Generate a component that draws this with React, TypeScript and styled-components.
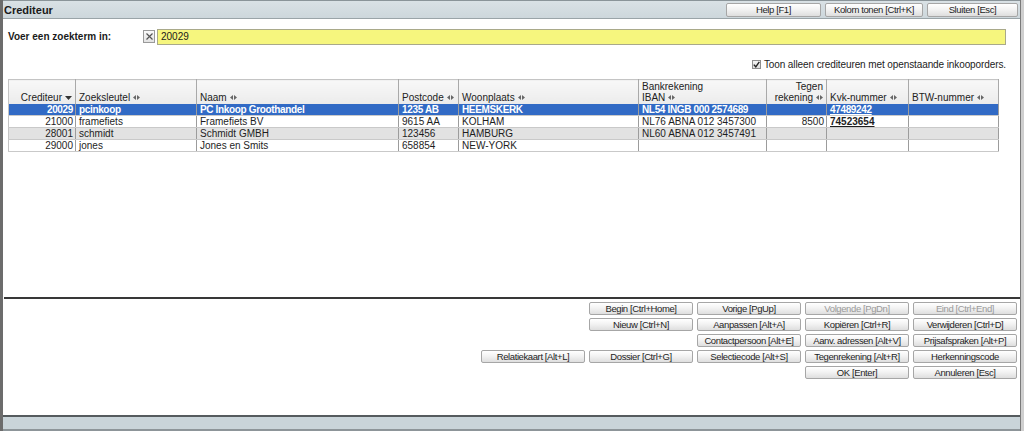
import React from "react";
import styled, { createGlobalStyle, css } from "styled-components";

const Global = createGlobalStyle`
  html, body { margin: 0; padding: 0; background: #cfcfcf; }
  body { font-family: "Liberation Sans", Arial, sans-serif; font-size: 10px; color: #1e1e1e; }
  * { box-sizing: border-box; }
`;

const Frame = styled.div`
  width: 1021px;
  height: 431px;
  display: flex;
  flex-direction: column;
  background: #fff;
  border-left: 3px solid #6c6c6c;
  border-right: 1px solid #7a7a7a;
  overflow: hidden;
`;

const TitleBar = styled.div`
  height: 19px;
  flex: none;
  display: flex;
  align-items: center;
  justify-content: space-between;
  padding: 0 2px 0 1px;
  background: linear-gradient(#d9e1e5, #cdd7dc);
  border-top: 1px solid #8a9499;
  border-bottom: 1px solid #9aa4a8;
`;

const Title = styled.span`
  font-size: 11px;
  font-weight: bold;
  color: #1a1a1a;
`;

const TitleButtons = styled.div`
  display: flex;
  gap: 4px;
`;

const Button = styled.button<{ $w?: number; $disabled?: boolean }>`
  width: ${(p) => (p.$w ? `${p.$w}px` : "auto")};
  height: 14px;
  padding: 0 4px;
  margin: 0;
  font-family: "Liberation Sans", Arial, sans-serif;
  font-size: 9.5px;
  letter-spacing: -0.4px;
  line-height: 12px;
  color: ${(p) => (p.$disabled ? "#9a9a9a" : "#1e1e1e")};
  background: linear-gradient(#ffffff, #f3f3f3 45%, #dedede);
  border: 1px solid #a6a6a6;
  border-radius: 2px;
  white-space: nowrap;
  overflow: hidden;
  cursor: default;
`;

const Body = styled.div`
  flex: 1;
  display: flex;
  flex-direction: column;
  padding: 10px 14px 0 5px;
`;

const SearchRow = styled.div`
  display: flex;
  align-items: flex-start;
  height: 16px;
`;

const SearchLabel = styled.label`
  width: 135px;
  flex: none;
  font-size: 10px;
  font-weight: bold;
  padding-top: 2px;
  color: #1a1a1a;
`;

const ClearBox = styled.span`
  width: 12px;
  height: 13px;
  margin-top: 1px;
  margin-right: 2px;
  flex: none;
  display: flex;
  align-items: center;
  justify-content: center;
  border: 1px solid #9a9a9a;
  background: linear-gradient(#fafafa, #e2e2e2);
`;

const SearchInput = styled.div`
  flex: 1;
  height: 16px;
  background: #f6f67e;
  border: 1px solid #a9a98a;
  padding: 1px 3px;
  font-size: 10px;
  line-height: 12px;
  color: #1a1a1a;
`;

const FilterRow = styled.div`
  display: flex;
  justify-content: flex-end;
  align-items: center;
  gap: 3px;
  margin-top: 14px;
  height: 10px;
  font-size: 10px;
  letter-spacing: -0.1px;
  color: #222;
`;

const CheckBox = styled.span`
  width: 9px;
  height: 9px;
  display: flex;
  align-items: center;
  justify-content: center;
  border: 1px solid #8e8e8e;
  background: linear-gradient(#f4f4f4, #dcdcdc);
`;

const GridTable = styled.table`
  margin-top: 10px;
  width: 990px;
  table-layout: fixed;
  border-collapse: collapse;
  border: 1px solid #c4c4c4;
  font-size: 10px;
`;

const HeadCell = styled.th<{ $align?: string }>`
  height: 24px;
  padding: 0 3px 1px;
  vertical-align: bottom;
  text-align: ${(p) => p.$align || "left"};
  font-weight: normal;
  line-height: 11px;
  color: #222;
  background: linear-gradient(#f8f8f8, #ebebeb);
  border-right: 1px solid #a9a9a9;
  border-top: 1px solid #c4c4c4;
  white-space: nowrap;
  overflow: hidden;
`;

const Row = styled.tr<{ $selected?: boolean; $shade?: boolean }>`
  height: 12px;
  background: ${(p) => (p.$selected ? "#316ac5" : p.$shade ? "#e2e2e2" : "#fff")};
  color: ${(p) => (p.$selected ? "#fff" : "#1e1e1e")};
  ${(p) =>
    p.$selected &&
    css`
      font-weight: bold;
      letter-spacing: -0.35px;
    `}
`;

const Cell = styled.td<{ $align?: string }>`
  height: 12px;
  padding: 0 2px 0 3px;
  line-height: 11px;
  text-align: ${(p) => p.$align || "left"};
  border-right: 1px solid #9c9c9c;
  border-bottom: 1px solid #c9c9c9;
  white-space: nowrap;
  overflow: hidden;
`;

const Link = styled.span`
  text-decoration: underline;
  font-weight: bold;
`;

const Separator = styled.div`
  flex: none;
  height: 2px;
  background: #383838;
  margin-left: 1px;
`;

const ButtonArea = styled.div`
  flex: none;
  height: 116px;
  display: flex;
  justify-content: flex-end;
  padding: 3px 3px 0 0;
`;

const ButtonGrid = styled.div`
  display: grid;
  grid-template-columns: repeat(5, 104px);
  grid-auto-rows: 13px;
  column-gap: 4px;
  row-gap: 3px;
`;

const GridButton = styled(Button)<{ $col: number; $row: number }>`
  grid-column: ${(p) => p.$col};
  grid-row: ${(p) => p.$row};
  width: 100%;
  height: 13px;
  line-height: 11px;
`;

const StatusBar = styled.div`
  flex: none;
  height: 16px;
  background: #c9d4d9;
  border-top: 2px solid #555b5e;
  border-bottom: 2px solid #8d9599;
`;

const SortIcon = () => (
  <svg width="7" height="5" viewBox="0 0 7 5" style={{ marginLeft: 3, verticalAlign: "middle" }}>
    <polygon points="0,2.5 3,0 3,5" fill="#666" />
    <polygon points="4,0 7,2.5 4,5" fill="#666" />
  </svg>
);

const DownIcon = () => (
  <svg width="7" height="4" viewBox="0 0 7 4" style={{ marginLeft: 3, verticalAlign: "middle" }}>
    <polygon points="0,0 7,0 3.5,4" fill="#333" />
  </svg>
);

type Col = {
  key: string;
  label: string[];
  width: number;
  align?: string;
  down?: boolean;
  link?: boolean;
};

const columns: Col[] = [
  { key: "cred", label: ["Crediteur"], width: 67, align: "right", down: true },
  { key: "zoek", label: ["Zoeksleutel"], width: 121 },
  { key: "naam", label: ["Naam"], width: 202 },
  { key: "post", label: ["Postcode"], width: 60 },
  { key: "woon", label: ["Woonplaats"], width: 180 },
  { key: "iban", label: ["Bankrekening", "IBAN"], width: 128 },
  { key: "tegen", label: ["Tegen", "rekening"], width: 60, align: "right" },
  { key: "kvk", label: ["Kvk-nummer"], width: 82, link: true },
  { key: "btw", label: ["BTW-nummer"], width: 90 },
];

const rows: Record<string, string>[] = [
  { cred: "20029", zoek: "pcinkoop", naam: "PC Inkoop Groothandel", post: "1235 AB", woon: "HEEMSKERK", iban: "NL54 INGB 000 2574689", tegen: "", kvk: "47489242", btw: "" },
  { cred: "21000", zoek: "framefiets", naam: "Framefiets BV", post: "9615 AA", woon: "KOLHAM", iban: "NL76 ABNA 012 3457300", tegen: "8500", kvk: "74523654", btw: "" },
  { cred: "28001", zoek: "schmidt", naam: "Schmidt GMBH", post: "123456", woon: "HAMBURG", iban: "NL60 ABNA 012 3457491", tegen: "", kvk: "", btw: "" },
  { cred: "29000", zoek: "jones", naam: "Jones en Smits", post: "658854", woon: "NEW-YORK", iban: "", tegen: "", kvk: "", btw: "" },
];

type Btn = { label: string; col: number; row: number; disabled?: boolean };

const buttons: Btn[] = [
  { label: "Begin [Ctrl+Home]", col: 2, row: 1 },
  { label: "Vorige [PgUp]", col: 3, row: 1 },
  { label: "Volgende [PgDn]", col: 4, row: 1, disabled: true },
  { label: "Eind [Ctrl+End]", col: 5, row: 1, disabled: true },
  { label: "Nieuw [Ctrl+N]", col: 2, row: 2 },
  { label: "Aanpassen [Alt+A]", col: 3, row: 2 },
  { label: "Kopiëren [Ctrl+R]", col: 4, row: 2 },
  { label: "Verwijderen [Ctrl+D]", col: 5, row: 2 },
  { label: "Contactpersoon [Alt+E]", col: 3, row: 3 },
  { label: "Aanv. adressen [Alt+V]", col: 4, row: 3 },
  { label: "Prijsafspraken [Alt+P]", col: 5, row: 3 },
  { label: "Relatiekaart [Alt+L]", col: 1, row: 4 },
  { label: "Dossier [Ctrl+G]", col: 2, row: 4 },
  { label: "Selectiecode [Alt+S]", col: 3, row: 4 },
  { label: "Tegenrekening [Alt+R]", col: 4, row: 4 },
  { label: "Herkenningscode", col: 5, row: 4 },
  { label: "OK [Enter]", col: 4, row: 5 },
  { label: "Annuleren [Esc]", col: 5, row: 5 },
];

export default function App() {
  return (
    <>
      <Global />
      <Frame>
        <TitleBar>
          <Title>Crediteur</Title>
          <TitleButtons>
            <Button $w={95}>Help [F1]</Button>
            <Button $w={98}>Kolom tonen [Ctrl+K]</Button>
            <Button $w={91}>Sluiten [Esc]</Button>
          </TitleButtons>
        </TitleBar>
        <Body>
          <SearchRow>
            <SearchLabel>Voer een zoekterm in:</SearchLabel>
            <ClearBox>
              <svg width="7" height="7" viewBox="0 0 7 7">
                <path d="M0.5 0.5 L6.5 6.5 M6.5 0.5 L0.5 6.5" stroke="#555" strokeWidth="1.2" />
              </svg>
            </ClearBox>
            <SearchInput>20029</SearchInput>
          </SearchRow>
          <FilterRow>
            <CheckBox>
              <svg width="7" height="7" viewBox="0 0 7 7">
                <path d="M0.8 3.6 L2.8 5.8 L6.3 0.9" stroke="#222" strokeWidth="1.4" fill="none" />
              </svg>
            </CheckBox>
            <span>Toon alleen crediteuren met openstaande inkooporders.</span>
          </FilterRow>
          <GridTable>
            <colgroup>
              {columns.map((c) => (
                <col key={c.key} style={{ width: c.width }} />
              ))}
            </colgroup>
            <thead>
              <tr>
                {columns.map((c) => (
                  <HeadCell key={c.key} $align={c.align}>
                    {c.label.length > 1 && (
                      <>
                        {c.label[0]}
                        <br />
                      </>
                    )}
                    {c.label[c.label.length - 1]}
                    {c.down ? <DownIcon /> : <SortIcon />}
                  </HeadCell>
                ))}
              </tr>
            </thead>
            <tbody>
              {rows.map((r, i) => (
                <Row key={r.cred} $selected={i === 0} $shade={i === 2}>
                  {columns.map((c) => (
                    <Cell key={c.key} $align={c.align}>
                      {c.link && r[c.key] ? <Link>{r[c.key]}</Link> : r[c.key]}
                    </Cell>
                  ))}
                </Row>
              ))}
            </tbody>
          </GridTable>
        </Body>
        <Separator />
        <ButtonArea>
          <ButtonGrid>
            {buttons.map((b) => (
              <GridButton key={b.label} $col={b.col} $row={b.row} $disabled={b.disabled}>
                {b.label}
              </GridButton>
            ))}
          </ButtonGrid>
        </ButtonArea>
        <StatusBar />
      </Frame>
    </>
  );
}
